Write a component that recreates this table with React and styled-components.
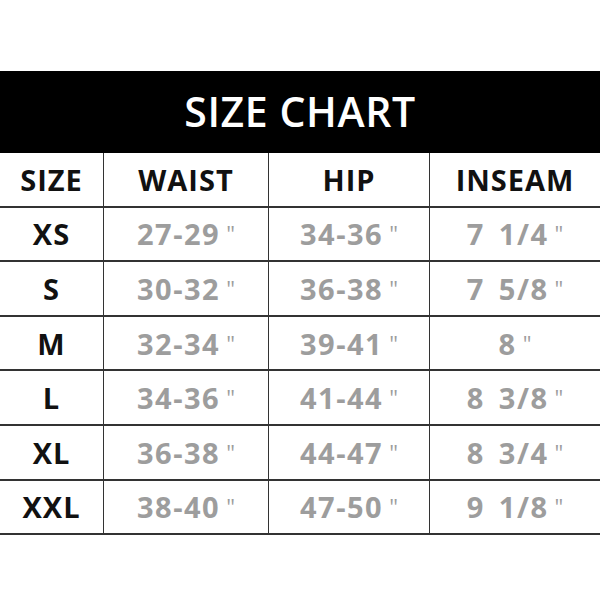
import styled, { createGlobalStyle } from 'styled-components';

const Global = createGlobalStyle`
  html, body {
    margin: 0;
    padding: 0;
    background: #ffffff;
  }
  body {
    font-family: "Open Sans", "Liberation Sans", sans-serif;
  }
`

const header = ["SIZE", "WAIST", "HIP", "INSEAM"]

const rows = [
  ["XS", "27-29", "34-36", "7 1/4"],
  ["S", "30-32", "36-38", "7 5/8"],
  ["M", "32-34", "39-41", "8"],
  ["L", "34-36", "41-44", "8 3/8"],
  ["XL", "36-38", "44-47", "8 3/4"],
  ["XXL", "38-40", "47-50", "9 1/8"],
]

function App() {
  return (
    <Page>
      <Global />
      <Banner>SIZE CHART</Banner>
      <Grid>
        {header.map((h, i) => (
          <Cell key={h} last={i === 3}>
            <HeadText>{h}</HeadText>
          </Cell>
        ))}
        {rows.map((r) =>
          r.map((v, i) => (
            <Cell key={r[0] + i} last={i === 3}>
              {i === 0 ? (
                <HeadText>{v}</HeadText>
              ) : (
                <Value>
                  {v}
                  <Inch>"</Inch>
                </Value>
              )}
            </Cell>
          ))
        )}
      </Grid>
    </Page>
  )
}

export default App

const Page = styled.div`
  width: 600px;
  height: 600px;
  padding-top: 71px;
  box-sizing: border-box;
  background: #fff;
`
const Banner = styled.div`
  height: 82px;
  background: #000;
  color: #fff;
  display: flex;
  align-items: center;
  justify-content: center;
  font-size: 41px;
  font-weight: 600;
  letter-spacing: 0.6px;
  padding-bottom: 2px;
  box-sizing: border-box;
`
const Grid = styled.div`
  display: grid;
  grid-template-columns: 104px 165px 161px 1fr;
  grid-template-rows: repeat(7, 54.6px);
`
const Cell = styled.div`
  display: flex;
  align-items: center;
  justify-content: center;
  border-bottom: 2px solid #333;
  border-right: ${(p) => (p.last ? "none" : "1.5px solid #333")};
  box-sizing: border-box;
  white-space: pre;
`
const HeadText = styled.span`
  font-size: 29px;
  font-weight: 700;
  letter-spacing: 1px;
  color: #111;
`
const Value = styled.span`
  font-size: 29px;
  font-weight: 700;
  letter-spacing: 1.5px;
  word-spacing: 5px;
  color: #9d9d9d;
  display: flex;
  align-items: flex-start;
`
const Inch = styled.span`
  font-size: 22px;
  font-weight: 400;
  letter-spacing: 0;
  margin-left: 6px;
  margin-top: 4px;
`
